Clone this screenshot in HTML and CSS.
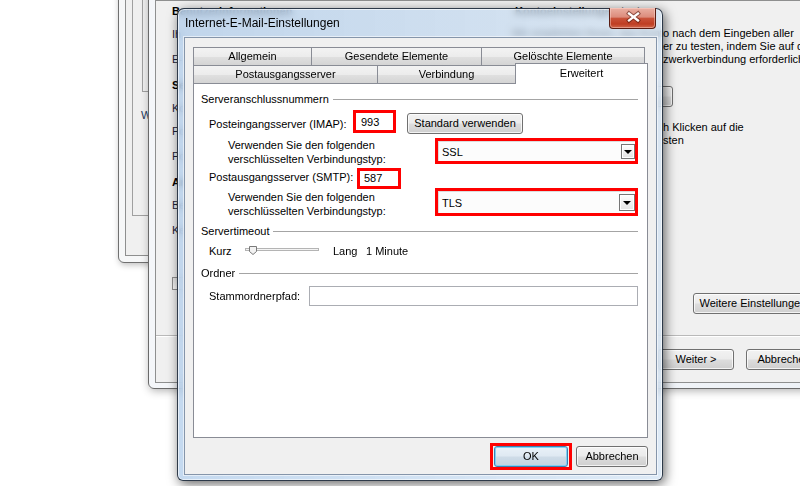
FILE: index.html
```html
<!DOCTYPE html>
<html lang="de">
<head>
<meta charset="utf-8">
<title>Internet-E-Mail-Einstellungen</title>
<link rel="stylesheet" href="styles.css">
</head>
<body>
<div class="desk">

  <div class="win win-a">
    <div class="wa-client">
      <div class="wa-pane">
        <div class="wa-box"></div>
        <div class="wa-w">W</div>
      </div>
    </div>
  </div>

  <div class="win win-b">
    <div class="wb-client">
      <div class="wb-main">
        <div class="wb-left">
          <div class="lb b first">Benutzerinformationen</div>
          <div class="lb g10">Ih</div>
          <div class="lb g11">E-</div>
          <div class="lb b g12">Se</div>
          <div class="lb g9">Ko</div>
          <div class="lb g10">Po</div>
          <div class="lb g11">Po</div>
          <div class="lb b g12">An</div>
          <div class="lb g9">Be</div>
          <div class="lb g11">Ke</div>
          <div class="wb-chk"></div>
        </div>
        <div class="wb-right">
          <div class="lb b first">Kontoeinstellungen testen</div>
          <div class="para p1">
            <div class="cut"><span class="pre">Wir empfehlen Ihnen, das Kont</span><span>o nach dem Eingeben aller</span></div>
            <div class="cut"><span class="pre"></span><span>er zu testen, indem Sie auf die</span></div>
            <div class="cut"><span class="pre"></span><span>zwerkverbindung erforderlich)</span></div>
          </div>
          <div class="btn wb-test"></div>
          <div class="para p2">
            <div class="cut"><span class="pre"></span><span>h Klicken auf die</span></div>
            <div class="cut"><span class="pre"></span><span>sten</span></div>
          </div>
          <div class="btn wb-more">Weitere Einstellungen ...</div>
        </div>
      </div>
      <div class="wb-foot">
        <div class="btn wb-next">Weiter &gt;</div>
        <div class="btn wb-cancel">Abbrechen</div>
      </div>
    </div>
  </div>

  <div class="dlg">
    <div class="dlg-title">
      <div class="dlg-caption">Internet-E-Mail-Einstellungen</div>
      <div class="dlg-close">
        <svg width="45" height="20" viewBox="0 0 45 20">
          <path d="M19 5.5 L28 12.5 M28 5.5 L19 12.5" stroke="#4a1208" stroke-opacity="0.55" stroke-width="4.2" stroke-linecap="square" fill="none"/>
          <path d="M19 5.5 L28 12.5 M28 5.5 L19 12.5" stroke="#ffffff" stroke-width="2.3" stroke-linecap="square" fill="none"/>
        </svg>
      </div>
    </div>
    <div class="dlg-client">
      <div class="tabs">
        <div class="tabrow">
          <div class="tab t-allg">Allgemein</div>
          <div class="tab t-ges">Gesendete Elemente</div>
          <div class="tab t-gel">Gelöschte Elemente</div>
        </div>
        <div class="tabrow">
          <div class="tab t-post">Postausgangsserver</div>
          <div class="tab t-verb">Verbindung</div>
          <div class="tab t-erw sel">Erweitert</div>
        </div>
      </div>
      <div class="panel">
        <div class="grp"><span>Serveranschlussnummern</span></div>
        <div class="row r-imap">
          <div class="lbl">Posteingangsserver (IMAP):</div>
          <div class="hl num n-imap">993</div>
          <div class="btn std">Standard verwenden</div>
        </div>
        <div class="row r-enc1">
          <div class="enc">Verwenden Sie den folgenden<br>verschlüsselten Verbindungstyp:</div>
          <div class="hl cbx c1"><div class="cbx-in"><span class="cbx-val">SSL</span><span class="arr"></span></div></div>
        </div>
        <div class="row r-smtp">
          <div class="lbl">Postausgangsserver (SMTP):</div>
          <div class="hl num n-smtp">587</div>
        </div>
        <div class="row r-enc2">
          <div class="enc">Verwenden Sie den folgenden<br>verschlüsselten Verbindungstyp:</div>
          <div class="hl cbx c2"><div class="cbx-in"><span class="cbx-val">TLS</span><span class="arr"></span></div></div>
        </div>
        <div class="grp g-time"><span>Servertimeout</span></div>
        <div class="row r-slide">
          <div class="lbl l-kurz">Kurz</div>
          <svg class="slider" width="74" height="14" viewBox="0 0 74 14">
            <rect x="0.5" y="4.5" width="73" height="2" fill="#f4f4f4" stroke="#b4b4b4"/>
            <path d="M4.5 2.5 H11.5 V7.5 L8 10.5 L4.5 7.5 Z" fill="#f2f2f2" stroke="#7a7a7a"/>
          </svg>
          <div class="lbl l-lang">Lang</div>
          <div class="lbl">1 Minute</div>
        </div>
        <div class="grp g-ord"><span>Ordner</span></div>
        <div class="row r-stamm">
          <div class="lbl l-stamm">Stammordnerpfad:</div>
          <div class="inp"></div>
        </div>
      </div>
      <div class="foot">
        <div class="hl okwrap"><div class="btn def">OK</div></div>
        <div class="btn cancel">Abbrechen</div>
      </div>
    </div>
  </div>

</div>
</body>
</html>
```
FILE: styles.css
```css
* { box-sizing: border-box; }
html, body { margin: 0; padding: 0; }
body {
  width: 800px; height: 486px; overflow: hidden; background: #ffffff;
  font-family: "Liberation Sans", Arial, sans-serif; font-size: 11px; color: #000;
}
.desk { position: relative; width: 800px; height: 486px; overflow: hidden; }

/* ---------- background window A ---------- */
.win { position: absolute; }
.win-a {
  left: 118px; top: -30px; width: 120px; height: 293px;
  border: 1px solid #707070; border-radius: 6px;
  background: #f6f7f8; padding: 24px 6px 6px 6px;
  display: flex; flex-direction: column;
  box-shadow: 1px 2px 6px rgba(0,0,0,0.25);
}
.wa-client { flex: 1; border: 1px solid #8e8f8f; background: #f0f0f0; padding-left: 6px; }
.wa-pane { height: 220px; border-left: 1px solid #a0a0a0; border-bottom: 1px solid #a0a0a0; }
.wa-box { margin-left: 9px; height: 96px; border-left: 1px solid #a0a0a0; border-bottom: 1px solid #a0a0a0; }
.wa-w { margin: 16px 0 0 8px; line-height: 14px; color: #23385a; }

/* ---------- background window B ---------- */
.win-b {
  left: 148px; top: -30px; width: 700px; height: 419px;
  border: 1px solid #6a6a6a; border-radius: 6px;
  background: linear-gradient(90deg, #f4f6f9, #eef2f7);
  padding: 29px 6px 5px 6px;
  display: flex; flex-direction: column;
  box-shadow: 1px 2px 8px rgba(0,0,0,0.3);
}
.wb-client { flex: 1; border: 1px solid #8e8f8f; background: #f0f0f0; display: flex; flex-direction: column; }
.wb-main { height: 334px; display: flex; }
.wb-left { width: 359px; padding-left: 16px; }
.wb-right { flex: 1; }
.lb { line-height: 14px; white-space: nowrap; color: #1b2336; }
.lb.b { font-weight: bold; color: #000; }
.lb.first { line-height: 12px; margin-top: 4px; }
.g9 { margin-top: 9px; }
.g10 { margin-top: 9px; }
.g11 { margin-top: 11px; }
.g12 { margin-top: 12px; }
.wb-left .g10:nth-child(2) { margin-top: 10px; }
.wb-chk {
  margin-top: 40px; width: 13px; height: 13px; border: 1px solid #8f8f8f;
  background: linear-gradient(#e6e6e6, #fbfbfb);
}
.para { line-height: 13px; }
.p1 { margin-top: 10px; }
.p2 { margin-top: 14px; }
.cut { display: grid; grid-template-columns: 148px max-content; white-space: nowrap; }
.pre { justify-self: end; }
.wb-test { margin-top: 20px; width: 158px; }
.wb-more { margin-top: 146px; margin-left: 178px; width: 132px; }
.wb-foot {
  flex: 1; border-top: 1px solid #b9b9b9; box-shadow: inset 0 1px 0 #ffffff;
  padding: 13px 0 0 502px; display: flex; gap: 12px; align-items: flex-start;
}
.wb-next, .wb-cancel { width: 76px; }

/* ---------- buttons ---------- */
.btn {
  height: 21px; border: 1px solid #707070; border-radius: 3px;
  background: linear-gradient(#f2f2f2 0%, #ebebeb 48%, #dddddd 52%, #cfcfcf 100%);
  box-shadow: inset 0 0 0 1px rgba(255,255,255,0.75);
  line-height: 19px; text-align: center; white-space: nowrap; color: #000;
}
.btn.def {
  width: 74px; border-color: #3c7fb1;
  background: linear-gradient(#e9f1f8 0%, #dfe9f2 48%, #cfdce8 52%, #c2d2e0 100%);
  box-shadow: inset 0 0 0 1px #7fd0f4;
}

/* ---------- dialog ---------- */
.dlg {
  position: absolute; left: 177px; top: 8px; width: 486px; height: 473px;
  border: 1px solid rgba(18,28,44,0.85); border-radius: 7px 7px 6px 6px;
  background: linear-gradient(90deg, rgba(176,204,234,0.74), rgba(206,224,242,0.68));
  -webkit-backdrop-filter: blur(3.5px);
  backdrop-filter: blur(3.5px);
  box-shadow: inset 0 0 0 1px rgba(255,255,255,0.6), 2px 3px 12px rgba(0,0,0,0.6);
  display: flex; flex-direction: column;
}
.dlg-title { height: 28px; display: flex; align-items: flex-start; padding: 0 6px 0 7px; }
.dlg-caption { flex: 1; font-size: 12px; line-height: 14px; margin-top: 7px; white-space: nowrap; }
.dlg-close {
  width: 47px; height: 21px; margin-top: -1px;
  border: 1px solid #5a1c12; border-top: none; border-radius: 0 0 4px 4px;
  background: linear-gradient(#eab0a3 0%, #dc8c7c 45%, #c9523a 52%, #bf3e23 80%, #d0674c 100%);
  box-shadow: inset 0 0 0 1px rgba(255,220,210,0.45);
}
.dlg-close svg { display: block; }
.dlg-client {
  flex: 1; margin: 0 5px 5px 6px;
  background: #f0f0f0; border: 1px solid #8595aa;
  box-shadow: 0 0 0 1px rgba(255,255,255,0.55);
  padding: 9px 8px 4px 8px;
  display: flex; flex-direction: column;
}

/* tabs */
.tabs { height: 36px; display: flex; flex-direction: column; position: relative; z-index: 1; }
.tabrow { display: flex; height: 18px; }
.tab {
  height: 18px; border: 1px solid #898c95; border-bottom: none;
  background: linear-gradient(#f3f3f3 0%, #ececec 50%, #e0e0e0 52%, #d4d4d4 100%);
  line-height: 17px; text-align: center; white-space: nowrap;
}
.tab + .tab { margin-left: -1px; }
.t-allg { width: 119px; }
.t-ges { width: 171px; }
.t-gel { width: 164px; }
.t-post { width: 185px; }
.t-verb { width: 139px; }
.t-erw { width: 133px; }
.tab.sel {
  align-self: flex-start; height: 21px; margin-top: -2px;
  background: #ffffff; line-height: 18px;
}

/* panel */
.panel {
  height: 355px; border: 1px solid #898c95; background: #ffffff;
  padding: 8px 9px 0 7px;
}
.grp { display: flex; align-items: center; height: 14px; line-height: 14px; white-space: nowrap; }
.grp::after { content: ""; flex: 1; height: 0; border-top: 1px solid #a4a4a4; margin-left: 4px; }
.g-time { margin-top: 8px; }
.g-ord { margin-top: 8px; }

.row { display: flex; align-items: flex-start; padding-left: 8px; }
.lbl { line-height: 14px; white-space: nowrap; }
.r-imap { margin-top: 4px; height: 23px; }
.r-imap .lbl { width: 144px; margin-top: 7px; }
.hl { border: 3px solid #ff0000; background: #ffffff; }
.num { line-height: 14px; }
.n-imap { width: 43px; height: 23px; padding: 2px 0 0 5px; }
.std { width: 116px; margin-top: 3px; margin-left: 11px; }

.r-enc1 { margin-top: 5px; height: 26px; }
.r-enc2 { height: 28px; }
.enc { width: 207px; margin-left: 19px; line-height: 14px; white-space: nowrap; }
.r-enc2 .enc { width: 208px; margin-top: 2px; }
.cbx { display: flex; }
.c1 { width: 203px; height: 26px; }
.c2 { width: 204px; height: 28px; }
.cbx-in {
  flex: 1; display: flex; align-items: center; justify-content: space-between;
  border-top: 1px solid #dcdcdc; border-left: 1px solid #dcdcdc;
  background: #fcfcfc; padding: 0 0 0 3px;
}
.cbx-val { line-height: 14px; }
.arr {
  width: 14px; height: 15px; border: 1px solid #767676;
  background: linear-gradient(#fdfdfd, #e4e4e4);
  box-shadow: inset 0 0 0 1px #ffffff;
  display: flex; align-items: center; justify-content: center;
}
.c2 .arr { width: 16px; height: 17px; margin-right: 0; }
.arr::before {
  content: ""; width: 0; height: 0; margin-top: 1px;
  border-top: 4px solid #000; border-left: 4px solid transparent; border-right: 4px solid transparent;
}

.r-smtp { margin-top: 4px; height: 20px; }
.r-smtp .lbl { width: 148px; margin-top: 2px; }
.n-smtp { width: 44px; height: 21px; padding: 0 0 0 4px; line-height: 14px; }

.r-slide { margin-top: 6px; height: 14px; }
.l-kurz { width: 36px; }
.slider { display: block; }
.l-lang { width: 33px; margin-left: 14px; }

.r-stamm { margin-top: 6px; height: 20px; }
.l-stamm { width: 100px; line-height: 20px; }
.inp { flex: 1; height: 20px; border: 1px solid #abadb3; background: #fff; }

/* footer */
.foot { margin-top: 5px; display: flex; justify-content: flex-end; align-items: center; gap: 4px; }
.okwrap { height: 27px; padding: 0 1px; background: transparent; }
.cancel { width: 72px; }
```
